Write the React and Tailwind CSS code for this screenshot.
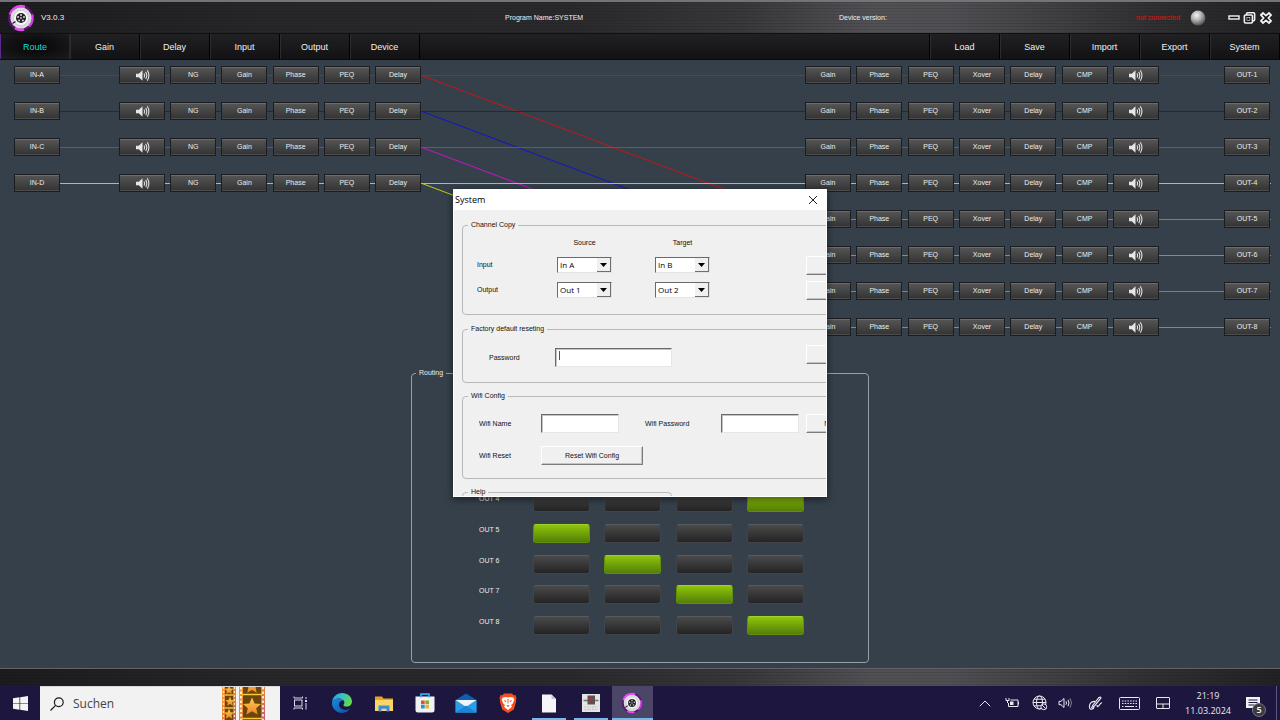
import React from "react";

const TABS_LEFT = ["Route", "Gain", "Delay", "Input", "Output", "Device"];
const TABS_RIGHT = ["Load", "Save", "Import", "Export", "System"];

const INPUTS = [
  { name: "IN-A", line: "bg-[#c4161c]", stroke: "#c4161c" },
  { name: "IN-B", line: "bg-[#1414c8]", stroke: "#1414c8" },
  { name: "IN-C", line: "bg-[#c814c8]", stroke: "#c814c8" },
  { name: "IN-D", line: "bg-[#c8c814]", stroke: "#c8c814" },
];

const OUTPUTS = [
  { name: "OUT-1", line: "bg-[#c4161c]" },
  { name: "OUT-2", line: "bg-[#1414c8]" },
  { name: "OUT-3", line: "bg-[#c814c8]" },
  { name: "OUT-4", line: "bg-[#c8c814]" },
  { name: "OUT-5", line: "bg-[#b8741c]" },
  { name: "OUT-6", line: "bg-[#14b8c8]" },
  { name: "OUT-7", line: "bg-[#14c828]" },
  { name: "OUT-8", line: "bg-[#94941c]" },
];

const IN_STAGES = ["speaker", "NG", "Gain", "Phase", "PEQ", "Delay"];
const OUT_STAGES = ["Gain", "Phase", "PEQ", "Xover", "Delay", "CMP", "speaker"];

const METAL =
  "bg-[repeating-linear-gradient(180deg,rgba(0,0,0,0.1)_0px,rgba(0,0,0,0.1)_1px,transparent_1px,transparent_3px),linear-gradient(90deg,#1c1c1e_0%,#272729_20%,#2a2a2c_45%,#38383b_58%,#515155_68%,#505054_74%,#414144_82%,#303032_90%,#222224_100%)]";

function Speaker() {
  return (
    <svg viewBox="0 0 16 14" className="h-[13px] w-[15px]" fill="none" stroke="#dedede">
      <path d="M1 5h3l4-3.600v11.200L4 9H1z" fill="#e6e6e6" stroke="none" />
      <path d="M9.600 4.800q1.300 2.200 0 4.400M11.400 3.100q2.400 3.900 0 7.800M13.200 1.400q3.400 5.600 0 11.200" strokeWidth="1.200" />
    </svg>
  );
}

function StageButton({ label }) {
  return (
    <button
      type="button"
      aria-label={label === "speaker" ? "Mute" : undefined}
      className="flex h-[18px] w-[46px] shrink-0 items-center justify-center border border-[#1b1d20] bg-linear-to-b from-[#565656] to-[#333333] text-[7px] leading-3 text-[#ececec] shadow-[inset_0_1px_0_#6c6c6c,inset_0_-1px_0_#4c4c4c]"
    >
      {label === "speaker" ? <Speaker /> : label}
    </button>
  );
}

function Wire({ color, size }) {
  return <span className={`h-px ${size} ${color}`} />;
}

function InputRow({ channel }) {
  return (
    <div className="flex h-[18px] items-center">
      <StageButton label={channel.name} />
      <Wire color={channel.line} size="w-[59px]" />
      <div className="flex flex-1 items-center">
        {IN_STAGES.map((s, i) => (
          <React.Fragment key={s}>
            {i > 0 && <Wire color={channel.line} size="flex-1" />}
            <StageButton label={s} />
          </React.Fragment>
        ))}
      </div>
    </div>
  );
}

function OutputRow({ channel }) {
  return (
    <div className="flex h-[18px] items-center">
      <div className="flex w-[354px] items-center">
        {OUT_STAGES.map((s, i) => (
          <React.Fragment key={s}>
            {i > 0 && <Wire color={channel.line} size="flex-1" />}
            <StageButton label={s} />
          </React.Fragment>
        ))}
      </div>
      <Wire color={channel.line} size="flex-1" />
      <StageButton label={channel.name} />
      <Wire color={channel.line} size="w-px" />
    </div>
  );
}

function Logo({ className }) {
  return (
    <svg viewBox="0 0 28 28" className={className}>
      <circle cx="14" cy="14" r="11.6" fill="none" stroke="#5a1470" strokeWidth="2.6" />
      <path d="M3 10.5A11.6 11.6 0 0 1 14 2.2l4 .6" fill="none" stroke="#e04cf0" strokeWidth="2.8" />
      <path d="M25.4 10.5v6A11.6 11.6 0 0 1 22 22.4" fill="none" stroke="#d83cec" strokeWidth="2.4" />
      <path d="M17 25.4a11.6 11.6 0 0 1-9-1.4" fill="none" stroke="#e04cf0" strokeWidth="2.8" />
      <circle cx="14" cy="14" r="10.6" fill="#dddbe1" />
      <circle cx="14" cy="14" r="7.6" fill="#f8f8fa" stroke="#c9c6cf" strokeWidth=".8" />
      <circle cx="14" cy="14" r="5" fill="#222226" />
      <g fill="#d4d4da">
        <circle cx="14" cy="10.9" r="1" />
        <circle cx="17" cy="13" r="1" />
        <circle cx="15.9" cy="16.6" r="1" />
        <circle cx="12.1" cy="16.6" r="1" />
        <circle cx="11" cy="13" r="1" />
      </g>
      <circle cx="14" cy="14" r=".9" fill="#c4c4c8" />
      <path d="M5.500 19.500l3-2" stroke="#222" strokeWidth="1.300" />
    </svg>
  );
}

function NavTab({ label, active }) {
  return (
    <button
      type="button"
      className={
        active
          ? "w-[70px] border-x border-l-[#5b2a8a] border-r-[#3b1460] bg-radial from-[#060607] to-[#1c1c1f] pt-0.5 text-[#10dcdc]"
          : "w-[70px] border-r border-black pt-0.5 text-[#f0f0f0] shadow-[inset_1px_0_0_#2c2c2e]"
      }
    >
      {label}
    </button>
  );
}

function Header() {
  return (
    <header>
      <div
        className={`grid h-[34px] grid-cols-[505fr_334fr_297fr_144px] items-center border-t-2 border-b border-t-[#737477] border-b-[#101012] text-[7px] leading-3 text-[#f0f0f0] ${METAL}`}
      >
        <div className="flex items-center gap-1.5 pl-[7px]">
          <Logo className="size-7" />
          <span className="text-[8px]">V3.0.3</span>
        </div>
        <span>Program Name:SYSTEM</span>
        <span>Device version:</span>
        <div className="flex items-center justify-between pr-[7px]">
          <span className="text-[#e0100c]">not connected</span>
          <svg viewBox="0 0 16 16" className="size-4">
            <defs>
              <radialGradient id="led" cx="40%" cy="32%" r="65%">
                <stop offset="0" stopColor="#f2f2f2" />
                <stop offset=".5" stopColor="#b4b4b4" />
                <stop offset="1" stopColor="#5c5c5c" />
              </radialGradient>
            </defs>
            <circle cx="8" cy="8" r="7.400" fill="url(#led)" />
          </svg>
          <div className="ml-3 flex items-center gap-[3px]">
            <button type="button" aria-label="Minimize">
              <svg viewBox="0 0 12 14" className="h-[14px] w-3">
                <rect x="1" y="5" width="10" height="3" fill="#111" stroke="#f4f4f4" strokeWidth="1.400" />
              </svg>
            </button>
            <button type="button" aria-label="Restore">
              <svg viewBox="0 0 13 14" className="h-[14px] w-[13px]" stroke="#f4f4f4" strokeWidth="1.600">
                <rect x="3.600" y="1.800" width="8" height="8" rx="1" fill="#111" />
                <rect x="1.400" y="4" width="8" height="8" rx="1" fill="#111" />
                <rect x="3.900" y="6.400" width="3" height="3" strokeWidth=".6" fill="#111" />
              </svg>
            </button>
            <button type="button" aria-label="Close">
              <svg viewBox="0 0 14 14" className="size-[14px]">
                <path
                  d="M2 4l2-2 3 2.600L10 2l2 2-2.600 3L12 10l-2 2-3-2.600L4 12l-2-2 2.600-3z"
                  fill="#111"
                  stroke="#f4f4f4"
                  strokeWidth="1.800"
                />
              </svg>
            </button>
          </div>
        </div>
      </div>
      <nav className="flex h-[26px] justify-between border-b border-[#0a0a0b] bg-linear-to-b from-[#212123] to-[#121214] text-[9px]">
        <div className="flex">
          {TABS_LEFT.map((t) => (
            <NavTab key={t} label={t} active={t === "Route"} />
          ))}
        </div>
        <div className="flex border-l border-black">
          {TABS_RIGHT.map((t) => (
            <NavTab key={t} label={t} />
          ))}
        </div>
      </nav>
    </header>
  );
}

function RoutingLines() {
  return (
    <svg viewBox="0 0 384 270" preserveAspectRatio="none" className="h-[270px] min-w-0 flex-1" fill="none">
      {INPUTS.map((c, i) => (
        <g key={c.name} stroke={c.stroke}>
          <path d={`M0 ${9.5 + i * 36}H384`} />
          <path d={`M1 ${9.5 + i * 36}L384 ${153.5 + i * 36}`} />
        </g>
      ))}
    </svg>
  );
}

function RoutingMatrix() {
  return (
    <fieldset className="mx-auto h-[296px] w-[458px] rounded-sm border border-[#98a0a5] pl-[67px] text-[7px] leading-3 text-[#ececec]">
      <legend className="-ml-[63px] px-[3px]">Routing</legend>
      <div className="mt-[22px] flex h-[234px] flex-col justify-between">
        {[1, 2, 3, 4, 5, 6, 7, 8].map((out) => (
          <div key={out} className="flex">
            <span className="w-[54px] leading-[11px]">OUT {out}</span>
            <div className="flex w-[271px] justify-between">
              {[0, 1, 2, 3].map((inp) => {
                const on = (out - 1) % 4 === inp;
                return (
                  <button
                    key={inp}
                    type="button"
                    aria-label={`Output ${out}, input ${inp + 1}`}
                    aria-pressed={on}
                    className={
                      on
                        ? "h-[19px] w-[57px] rounded-[3px] border border-[#5f8f0c] border-t-[#9fd02c] bg-linear-to-b from-[#8ec60a] to-[#557e08]"
                        : "h-[19px] w-[57px] rounded-[3px] border border-[#3e444a] border-t-[#565b60] bg-linear-to-b from-[#4a4a4a] to-[#242424]"
                    }
                  />
                );
              })}
            </div>
          </div>
        ))}
      </div>
    </fieldset>
  );
}

function Combo({ id, label, options }) {
  return (
    <div className="relative h-4 w-[55px]">
      <select
        id={id}
        aria-label={label}
        className="h-4 w-full appearance-none border border-[#e3e3e3] border-t-[#6a6a6a] border-l-[#6a6a6a] bg-white pr-3 pl-0.5 font-['Open_Sans',sans-serif] text-[8px] leading-3 text-black"
      >
        {options.map((o) => (
          <option key={o}>{o}</option>
        ))}
      </select>
      <span className="pointer-events-none absolute top-px right-px flex h-[14px] w-[14px] items-center justify-center border-r border-b border-[#6e6e6e] bg-[#f0f0f0]">
        <svg viewBox="0 0 7 4" className="h-1 w-[7px]">
          <path d="M0 0h7L3.500 4z" fill="#000" />
        </svg>
      </span>
    </div>
  );
}

function PlainButton({ children, className, label }) {
  return (
    <button
      type="button"
      aria-label={label}
      className={`h-[19px] border border-t-white border-r-[#7c7c7c] border-b-[#7c7c7c] border-l-white bg-[#f0f0f0] shadow-[inset_-1px_-1px_0_#c4c4c4] ${className}`}
    >
      {children}
    </button>
  );
}

const GROUP = "w-[450px] rounded-sm border border-[#b9b9b9]";
const LEGEND = "ml-[5px] px-[3px]";
const FIELD =
  "border border-[#e6e6e6] border-t-[#6a6a6a] border-l-[#6a6a6a] bg-white px-1 outline-none shadow-[inset_1px_1px_0_#c4c4c4]";

function SystemDialog() {
  return (
    <section
      role="dialog"
      aria-label="System"
      className="absolute top-1/2 left-1/2 flex h-[308px] w-[374px] -translate-x-1/2 -translate-y-1/2 flex-col overflow-hidden border border-white bg-[#f0f0f0] text-[7px] leading-3 text-[#111111] shadow-[0_2px_8px_rgba(0,0,0,0.55)]"
    >
      <div className="flex h-5 shrink-0 items-center justify-between bg-white pr-2 pl-px font-['Open_Sans',sans-serif]">
        <h2 className="text-[9px] leading-4 text-black">System</h2>
        <button type="button" aria-label="Close dialog">
          <svg viewBox="0 0 10 10" className="size-[10px]" stroke="#222" strokeWidth="1">
            <path d="M1 1l8 8M9 1L1 9" />
          </svg>
        </button>
      </div>
      <div className="flex flex-col pt-[9px] pl-2">
        <fieldset className={`h-24 ${GROUP}`}>
          <legend className={LEGEND}>Channel Copy</legend>
          <div className="grid grid-cols-[80px_98px_151px_75px] grid-rows-[12px_18px_18px] items-center gap-y-[7px] pt-1.5 pl-[14px]">
            <span className="col-start-2 w-[55px] text-center">Source</span>
            <span className="col-span-2 w-[55px] text-center">Target</span>
            <label htmlFor="in-source">Input</label>
            <Combo id="in-source" options={["In A", "In B", "In C", "In D"]} />
            <Combo id="in-target" label="Input target" options={["In B", "In A", "In C", "In D"]} />
            <PlainButton label="Copy input" />
            <label htmlFor="out-source">Output</label>
            <Combo id="out-source" options={["Out 1", "Out 2", "Out 3", "Out 4"]} />
            <Combo id="out-target" label="Output target" options={["Out 2", "Out 1", "Out 3", "Out 4"]} />
            <PlainButton label="Copy output" />
          </div>
        </fieldset>

        <fieldset className={`mt-2 h-[60px] ${GROUP}`}>
          <legend className={LEGEND}>Factory default reseting</legend>
          <div className="flex h-8 items-end pl-[26px]">
            <label htmlFor="factory-password" className="w-[66px] leading-[18px]">
              Password
            </label>
            <div className="relative flex">
              <input id="factory-password" type="password" className={`h-[19px] w-[117px] ${FIELD}`} />
              <span className="absolute top-[3px] left-1 h-[9px] w-px bg-[#555555]" />
            </div>
            <PlainButton label="Reset to factory defaults" className="mb-[3px] ml-[134px] w-[75px]" />
          </div>
        </fieldset>

        <fieldset className={`mt-[7px] h-[89px] ${GROUP}`}>
          <legend className={LEGEND}>Wifi Config</legend>
          <div className="flex flex-col gap-[13px] pt-3 pl-4">
            <div className="flex items-center">
              <label htmlFor="wifi-name" className="w-[62px]">
                Wifi Name
              </label>
              <input id="wifi-name" type="text" className={`h-[19px] w-[78px] ${FIELD}`} />
              <label htmlFor="wifi-password" className="ml-[26px] w-[76px]">
                Wifi Password
              </label>
              <input id="wifi-password" type="password" className={`h-[19px] w-[78px] ${FIELD}`} />
              <PlainButton className="ml-[7px] w-[57px]">Modify</PlainButton>
            </div>
            <div className="flex items-center">
              <span className="w-[62px]">Wifi Reset</span>
              <PlainButton className="w-[102px]">Reset Wifi Config</PlainButton>
            </div>
          </div>
        </fieldset>

        <fieldset className="mt-[7px] h-[60px] w-[210px] rounded-sm border border-[#b9b9b9]">
          <legend className={LEGEND}>Help</legend>
        </fieldset>
      </div>
    </section>
  );
}

/* Taskbar icons */

function FilmStrips() {
  const star = "M0-9L2.6-3 9-2.4 4.2 1.8 5.6 8 0 4.8-5.6 8-4.2 1.8-9-2.4-2.6-3z";
  return (
    <svg viewBox="0 0 44 33" className="h-[33px] w-11">
      <defs>
        <linearGradient id="film" x1="0" y1="0" x2="1" y2="1">
          <stop offset="0" stopColor="#f6a03a" />
          <stop offset=".5" stopColor="#e8843c" />
          <stop offset="1" stopColor="#c0587e" />
        </linearGradient>
        <linearGradient id="star" x1="0" y1="0" x2="0" y2="1">
          <stop offset="0" stopColor="#ffcf4a" />
          <stop offset="1" stopColor="#f08428" />
        </linearGradient>
      </defs>
      <rect x="0" width="14" height="33" fill="url(#film)" />
      <rect x="3" width="8" height="33" fill="#6a460c" />
      <path d="M1.5 0v33M12.5 0v33" stroke="#ffe7a0" strokeWidth="1.2" strokeDasharray="2 2" />
      <path d="M3 8h8M3 21h8" stroke="#f6c03a" strokeWidth="1.5" />
      <g fill="url(#star)">
        <path d={star} transform="translate(7 3) scale(.5)" />
        <path d={star} transform="translate(8 14.5) scale(.52)" />
        <path d={star} transform="translate(7 27) scale(.58)" />
      </g>
      <rect x="17" width="26" height="33" fill="url(#film)" />
      <rect x="21" width="18" height="33" fill="#6a460c" />
      <path d="M19 0v33M41 0v33" stroke="#fff3d0" strokeWidth="1.8" strokeDasharray="2.5 2" />
      <path d="M20 7.5h20M20 31.5h20" stroke="#f6c83a" strokeWidth="1.6" />
      <g fill="url(#star)">
        <path d={star} transform="translate(30 -1) scale(.85)" />
        <path d={star} transform="translate(30 19.5)" />
      </g>
    </svg>
  );
}

function TaskViewIcon() {
  return (
    <svg viewBox="0 0 15 14" className="h-[14px] w-[15px]" fill="none" stroke="#dcdae6">
      <rect x="1.5" y="4" width="7.5" height="6" />
      <path d="M1 .5v1.500h8.500V.5M1 13.500V12h8.500v1.500M13 1v2M13 7v6.500" />
      <rect x="12" y="4" width="2" height="2" fill="#dcdae6" stroke="none" />
    </svg>
  );
}

function EdgeIcon() {
  return (
    <svg viewBox="0 0 20 20" className="size-5">
      <defs>
        <linearGradient id="edgeTop" x1="0" y1="0" x2="1" y2=".4">
          <stop offset="0" stopColor="#1f9fe8" />
          <stop offset=".5" stopColor="#35c1c9" />
          <stop offset="1" stopColor="#62d84e" />
        </linearGradient>
        <linearGradient id="edgeLow" x1="0" y1="0" x2="1" y2="1">
          <stop offset="0" stopColor="#1b8be0" />
          <stop offset="1" stopColor="#0c4ea6" />
        </linearGradient>
      </defs>
      <path d="M0 9.500C.5 4 4.700 0 10 0c5.600 0 10 3.800 10 8.600 0 3-2.300 5-5.200 5-2 0-3.300-.7-3.300-1.600 0-.6.900-1 .9-2.400C12.400 7.400 9.700 5.500 6.600 5.500 3.500 5.500 1 7 0 9.500z" fill="url(#edgeTop)" />
      <path d="M0 9.500C1 7 3.500 5.500 6.600 5.500c2 0 3.800.8 4.800 2C8.600 7.300 7 9.400 7 11.600c0 3.400 3.200 5.400 6.400 5.400 2 0 3.600-.6 4.800-1.400C16.400 18.400 13.400 20 10 20 4.500 20-.4 15.500 0 9.500z" fill="url(#edgeLow)" />
    </svg>
  );
}

function FolderIcon() {
  return (
    <svg viewBox="0 0 20 17" className="h-[17px] w-5">
      <path d="M1 1.500h7l1.500 2H19V16H1z" fill="#e8a51c" />
      <path d="M1 5h18v11H1z" fill="#fbd565" />
      <path d="M4.500 16.500V10.500h11v6h-3v-2.800h-5v2.800z" fill="#3b8fd8" />
    </svg>
  );
}

function StoreIcon() {
  return (
    <svg viewBox="0 0 20 20" className="size-5">
      <path d="M6 5V1h8v4" fill="none" stroke="#2aa5e8" strokeWidth="1.4" />
      <path d="M.5 3.500h19V17a2.500 2.500 0 0 1-2.500 2.500H3A2.500 2.500 0 0 1 .5 17z" fill="#f2f2f5" />
      <path d="M6 4.500V1.200h8v3.300" fill="none" stroke="#2aa5e8" strokeWidth="1.4" />
      <path d="M6 7.500h3.700v3.700H6z" fill="#e8502a" />
      <path d="M10.300 7.500H14v3.700h-3.700z" fill="#74b52a" />
      <path d="M6 11.800h3.700v3.700H6z" fill="#1c98e0" />
      <path d="M10.300 11.800H14v3.700h-3.700z" fill="#f0b41c" />
    </svg>
  );
}

function MailIcon() {
  return (
    <svg viewBox="0 0 22 20" className="h-5 w-[22px]">
      <path d="M.5 7L11 .5 21.500 7v12.500H.5z" fill="#0f5fae" />
      <path d="M.5 7L11 14l10.500-7v12.500H.5z" fill="#2a9fe8" />
      <path d="M.5 7h21L11 14z" fill="#eef4fa" />
      <path d="M.5 19.500L11 12.500l10.500 7z" fill="#1b84d6" />
    </svg>
  );
}

function BraveIcon() {
  return (
    <svg viewBox="0 0 18 20" className="h-5 w-[18px]">
      <path d="M5 .5h8l1.500 1.700 1.800-.3L17.500 5l-.6 2 .3 1.200-2.400 8.300L9 20l-5.800-3.500L.8 8.200 1.100 7 .5 5l1.200-3.100 1.800.3z" fill="#f4501e" />
      <path d="M4 4.500l3-.6 2 .6 2-.6 3 .6 1.300 2-1.500 4-1.800 1.600 1 1.700L9 17l-4-3.200 1-1.700-1.800-1.600-1.500-4z" fill="#fff" />
      <path d="M5 7l2.600 1L6.300 9.200zM13 7l-2.600 1 1.300 1.200zM7.300 12.700L9 12l1.700.7L9 14zM8.500 6h1l-.1 4.500h-.8z" fill="#f4501e" />
    </svg>
  );
}

function DocIcon() {
  return (
    <svg viewBox="0 0 14 19" className="h-[19px] w-[14px]">
      <path d="M0 .5h9.500L14 5v13.500H0z" fill="#f6f6f8" />
      <path d="M9.500.5V5H14z" fill="#c4c4cc" />
    </svg>
  );
}

function DeviceIcon() {
  return (
    <svg viewBox="0 0 18 18" className="size-[18px]">
      <rect width="18" height="18" fill="#e4e4e4" />
      <path d="M1.500 6.500h15" stroke="#777" strokeWidth="1.6" />
      <rect x="5.5" y="1.5" width="7.5" height="9" fill="#555" />
      <path d="M9.300 2.500v4.500" stroke="#d8201c" strokeWidth="1.8" />
      <path d="M2.500 13h13M2.500 15.500h13" stroke="#bbb" strokeDasharray="1.5 1" />
    </svg>
  );
}

const APPS = [
  { name: "Task view", icon: <TaskViewIcon /> },
  { name: "Edge", icon: <EdgeIcon /> },
  { name: "Explorer", icon: <FolderIcon /> },
  { name: "Store", icon: <StoreIcon /> },
  { name: "Mail", icon: <MailIcon /> },
  { name: "Brave", icon: <BraveIcon /> },
  { name: "Document", icon: <DocIcon />, state: "open" },
  { name: "Device", icon: <DeviceIcon />, state: "open" },
  { name: "Audio processor", icon: <Logo className="size-[22px]" />, state: "active" },
];

function Taskbar() {
  return (
    <footer className="flex h-[34px] bg-[#1d1740] font-['Open_Sans',sans-serif] text-[#e9e8f0]">
      <button type="button" aria-label="Start" className="flex w-10 items-center justify-center">
        <svg viewBox="0 0 15 15" className="size-[15px]" fill="#f4f4f8">
          <path d="M0 2.200l6.500-.9v5.900H0zM7.200 1.200L15 0v7.200H7.200zM0 7.800h6.500v5.900L0 12.800zM7.200 7.800H15V15l-7.800-1.200z" />
        </svg>
      </button>
      <label className="flex w-60 items-center border-t border-[#d8d8de] bg-[#f2f2f2]">
        <svg viewBox="0 0 14 14" className="ml-[10px] size-[14px] shrink-0" fill="none" stroke="#1a1a1a" strokeWidth="1.2">
          <circle cx="8.800" cy="5.200" r="4.400" />
          <path d="M5.600 8.400L.5 13.500" />
        </svg>
        <input
          type="text"
          aria-label="Suchen"
          placeholder="Suchen"
          className="ml-[9px] h-6 w-[149px] bg-transparent text-[12px] text-[#333333] outline-none placeholder:text-[#444444]"
        />
        <FilmStrips />
      </label>
      <div className="grid w-[373px] grid-cols-9">
        {APPS.map((app) => (
          <button
            key={app.name}
            type="button"
            aria-label={app.name}
            className={`flex flex-col items-center ${app.state === "active" ? "bg-[#4b4668]" : ""}`}
          >
            <span className="flex h-8 items-center pt-0.5">{app.icon}</span>
            {app.state === "open" && <span className="h-0.5 w-[34px] bg-[#76b9ed]" />}
            {app.state === "active" && <span className="h-0.5 w-full bg-[#76b9ed]" />}
          </button>
        ))}
      </div>
      <div className="flex-1" />
      <div className="flex items-center">
        <svg viewBox="0 0 12 7" className="h-[7px] w-3" fill="none" stroke="#e9e8f0">
          <path d="M.8 6.200L6 1l5.200 5.200" />
        </svg>
        <svg viewBox="0 0 15 12" className="ml-[14px] h-3 w-[15px]" fill="none" stroke="#e9e8f0">
          <path d="M5.500 3h7.500v6.500H3.500V6M13.500 5v2.500" />
          <rect x="5" y="4.5" width="3.5" height="3.5" fill="#e9e8f0" stroke="none" />
          <path d="M1 1v2.500h3V1M2.500 3.500V6" />
        </svg>
        <svg viewBox="0 0 16 16" className="ml-3 size-4" fill="none" stroke="#e9e8f0">
          <circle cx="7.500" cy="7.500" r="6.500" />
          <ellipse cx="7.500" cy="7.500" rx="3" ry="6.500" />
          <path d="M1 7.500h13M2 4.200h11M2 10.800h7" />
          <circle cx="11.800" cy="11.800" r="2.900" fill="#1d1740" />
          <path d="M9.900 9.900l3.800 3.800" />
        </svg>
        <svg viewBox="0 0 15 12" className="ml-[10px] h-3 w-[15px]" fill="none" stroke="#e9e8f0">
          <path d="M1 4.300h2l3-2.800v9L3 7.700H1z" />
          <path d="M8 4.300q1 1.700 0 3.400M10 2.800q2 3.200 0 6.400" />
          <path d="M12 1.300q3 4.700 0 9.400" opacity=".5" />
        </svg>
        <svg viewBox="0 0 15 14" className="ml-[15px] h-[14px] w-[15px]" fill="none" stroke="#e9e8f0" strokeWidth="1.2">
          <path d="M5 9l6-7.500q1.500-1 2 .5L6.500 10 4 11zM7 5.500C3 5 1 8.500 1.500 11.500s4 1.500 4.500-.5M9 9c0 2 1 2 2 .5s2-3 3-2.500" />
        </svg>
        <svg viewBox="0 0 21 13" className="ml-4 h-[13px] w-[21px]" fill="none" stroke="#e9e8f0">
          <rect x=".5" y=".5" width="20" height="12" rx="1" />
          <path d="M3 4h15M3 6.500h15" strokeDasharray="1.5 1.2" />
          <path d="M3 9.500h1.500M6 9.500h9M16.500 9.500H18" />
        </svg>
        <svg viewBox="0 0 14 12" className="ml-4 h-3 w-[14px]" fill="none" stroke="#e9e8f0">
          <rect x=".5" y=".5" width="13" height="11" rx=".5" />
          <path d="M.5 7h13M7 7v4.500" />
        </svg>
        <div className="ml-[15px] flex flex-col items-center text-[9px] leading-[15px]">
          <span>21:19</span>
          <span>11.03.2024</span>
        </div>
        <div className="relative mt-1.5 ml-[15px] h-5 w-[22px]">
          <svg viewBox="0 0 15 15" className="size-[15px]">
            <path d="M0 1h14v11H9l-2.500 3v-3H0z" fill="#f4f4f8" />
            <path d="M2.500 4h9M2.500 6.500h9M2.500 9h6" stroke="#1d1740" />
          </svg>
          <span className="absolute top-[7px] left-[6px] flex size-[14px] items-center justify-center rounded-full border border-[#77757f] bg-[#3a3a40] text-[9px] leading-3 font-semibold text-white">
            5
          </span>
        </div>
        <span className="mr-[3px] ml-2 h-[34px] w-px bg-[#5c577c]" />
      </div>
    </footer>
  );
}

export default function App() {
  return (
    <div className="flex min-h-screen flex-col bg-[#35404b] font-['Liberation_Sans',Arial,sans-serif]">
      <div className="relative flex flex-1 flex-col">
        <Header />
        <main className="flex flex-1 flex-col pt-1.5 pb-[5px]">
          <div className="flex items-start">
            <div className="flex w-[421px] flex-col gap-[18px] pl-[14px]">
              {INPUTS.map((c) => (
                <InputRow key={c.name} channel={c} />
              ))}
            </div>
            <RoutingLines />
            <div className="flex w-[475px] flex-col gap-[18px] pr-[9px]">
              {OUTPUTS.map((c) => (
                <OutputRow key={c.name} channel={c} />
              ))}
            </div>
          </div>
          <div className="mt-[31px]">
            <RoutingMatrix />
          </div>
        </main>
        <div className={`h-[18px] border-t border-t-[#626468] ${METAL}`} />
        <SystemDialog />
      </div>
      <Taskbar />
    </div>
  );
}
